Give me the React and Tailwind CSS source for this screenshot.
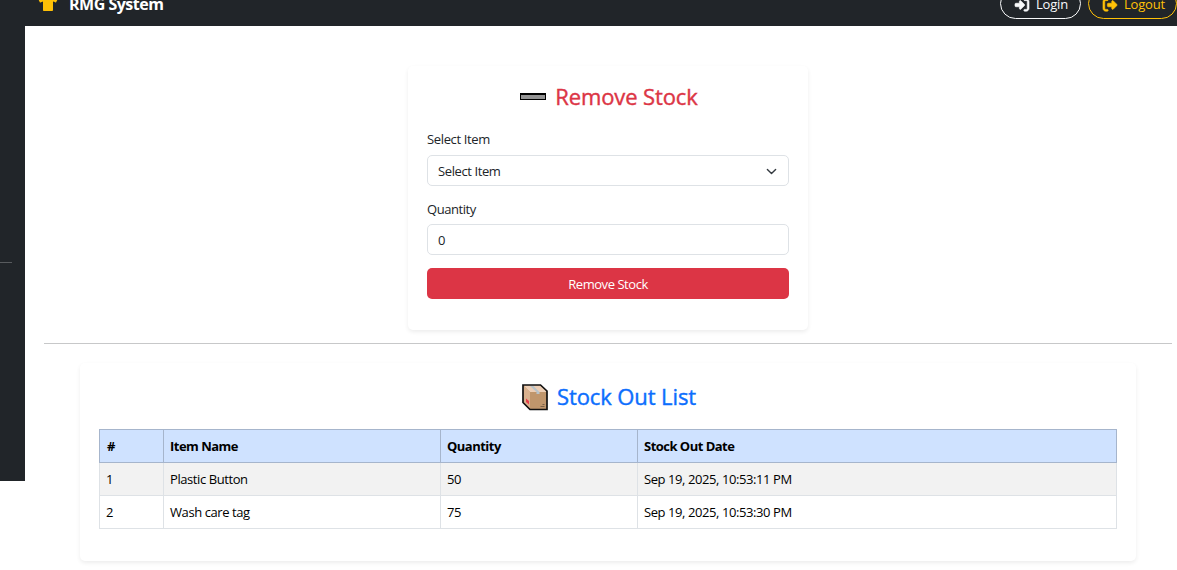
import { FaTshirt } from "react-icons/fa";
import { FaRightToBracket, FaRightFromBracket } from "react-icons/fa6";

const rows = [
  { id: 1, name: "Plastic Button", qty: 50, date: "Sep 19, 2025, 10:53:11 PM" },
  { id: 2, name: "Wash care tag", qty: 75, date: "Sep 19, 2025, 10:53:30 PM" },
];

function MinusIcon() {
  return (
    <svg width="26" height="8" viewBox="0 0 26 8" className="mt-[2px] mr-px shrink-0" shapeRendering="crispEdges">
      <rect width="26" height="7" fill="#000" />
      <rect x="1" y="2" width="24" height="4" fill="#949494" />
    </svg>
  );
}

function BoxIcon() {
  return (
    <svg width="26" height="27" viewBox="0 0 26 27" className="mt-[2px] shrink-0">
      <path d="M1 1H18.5L25 7V25.5H8L1 18.5Z" fill="#c0966c" />
      <path d="M1 1H18.5L25 8H8Z" fill="#ecceb5" />
      <path d="M1 1L8 8V25.5L1 18.5Z" fill="#d9b18e" />
      <path d="M7.5 1.5H11L17.5 8V10H14.5V8Z" fill="#b9c3c9" />
      <path d="M4 14.5L7 17V20.5L4 18Z" fill="#e8404b" />
      <path d="M18.5 22.5H22.5M20.5 20.5H22.5" stroke="#7b6047" strokeWidth="1.2" />
      <path d="M1 1H18.5L25 7V25.5H8L1 18.5Z" fill="none" stroke="#111" strokeWidth="1.7" />
    </svg>
  );
}

function Chevron() {
  return (
    <svg width="11" height="11" viewBox="0 0 16 16" fill="none" stroke="#343a40" strokeWidth="2" strokeLinecap="round" strokeLinejoin="round" className="mt-px">
      <path d="m2 5 6 6 6-6" />
    </svg>
  );
}

function Header() {
  return (
    <header className="flex h-[26px] shrink-0 items-end justify-between overflow-hidden bg-[#212529] pl-[38px]">
      <div className="mb-[10px] flex h-[24px] items-center text-white">
        <FaTshirt className="mb-[3px] h-4 w-5 text-[#ffc107]" />
        <span className="ml-[11px] text-[16px] leading-6 font-bold tracking-[-0.5px]">RMG System</span>
      </div>
      <div className="mb-[7px] flex gap-[7px] text-[13px] tracking-[-0.2px]">
        <div className="flex h-[31px] w-[81px] items-center rounded-full border border-[#f8f9fa] pl-[14px] text-[#f8f9fa]">
          <FaRightToBracket className="mt-[2px] size-[14px] overflow-visible stroke-[24]" />
          <span className="ml-[7px] pt-[3px]">Login</span>
        </div>
        <div className="flex h-[31px] w-[89px] items-center rounded-full border border-[#ffc107] pl-[14px] text-[#ffc107]">
          <FaRightFromBracket className="mt-[2px] size-[14px] overflow-visible stroke-[24]" />
          <span className="ml-[7px] pt-[3px]">Logout</span>
        </div>
      </div>
    </header>
  );
}

function RemoveStockCard() {
  return (
    <section className="mx-auto mt-[40px] h-[264px] w-[400px] rounded-[5px] bg-white px-[19px] pt-[16px] shadow-[0_2px_4px_rgba(0,0,0,0.075)]">
      <h2 className="flex h-[28px] items-center justify-center gap-[8px] pl-[2px] text-[22px] font-medium text-[#dc3545]">
        <MinusIcon />
        <span className="tracking-[-0.12px] [-webkit-text-stroke:0.4px_#dc3545]">Remove Stock</span>
      </h2>
      <label className="mt-[20px] block h-[19px] leading-[19px]">Select Item</label>
      <div className="mt-[6px] flex h-[31px] items-center justify-between rounded-[5px] border border-[#dee2e6] pr-[11px] pl-[10px]">
        <span className="pt-[2px] tracking-[-0.4px]">Select Item</span>
        <Chevron />
      </div>
      <label className="mt-[14px] block h-[19px] leading-[19px] tracking-[-0.45px]">Quantity</label>
      <div className="mt-[5px] flex h-[31px] items-center rounded-[5px] border border-[#dee2e6] pt-[2px] pl-[10px]">0</div>
      <button className="mt-[13px] block h-[31px] w-full rounded-[5px] bg-[#dc3545] pt-[3px] tracking-[-0.45px] text-white">Remove Stock</button>
    </section>
  );
}

function StockOutCard() {
  return (
    <section className="mx-auto mt-[19px] h-[198px] w-[1056px] rounded-[5px] bg-white px-[19px] pt-[19px] shadow-[0_2px_4px_rgba(0,0,0,0.075)]">
      <h2 className="flex h-[28px] items-center justify-center gap-[9px] pl-[2px] text-[22px] font-medium text-[#0d6efd]">
        <BoxIcon />
        <span className="tracking-[-0.1px] [-webkit-text-stroke:0.4px_#0d6efd]">Stock Out List</span>
      </h2>
      <table className="mt-[19px] w-[1018px] table-fixed border-collapse text-left tracking-[-0.42px] text-black">
        <colgroup>
          <col className="w-[64px]" />
          <col className="w-[277px]" />
          <col className="w-[197px]" />
          <col />
        </colgroup>
        <thead>
          <tr className="h-[33px] bg-[#cfe2ff] font-bold tracking-[-0.52px]">
            {["#", "Item Name", "Quantity", "Stock Out Date"].map((h) => (
              <th key={h} className="border border-[#a6b5cc] px-[6px] pt-[2px] pb-0 first:pl-[7px]">{h}</th>
            ))}
          </tr>
        </thead>
        <tbody>
          {rows.map((r) => (
            <tr key={r.id} className="h-[33px] odd:bg-[#f2f2f2]">
              <td className="border border-[#dee2e6] px-[6px] pt-[2px] pb-0">{r.id}</td>
              <td className="border border-[#dee2e6] px-[6px] pt-[2px] pb-0">{r.name}</td>
              <td className="border border-[#dee2e6] px-[6px] pt-[2px] pb-0">{r.qty}</td>
              <td className="border border-[#dee2e6] px-[6px] pt-[2px] pb-0">{r.date}</td>
            </tr>
          ))}
        </tbody>
      </table>
    </section>
  );
}

export default function App() {
  return (
    <div className="flex h-[570px] w-[1177px] flex-col overflow-hidden bg-white font-['Open_Sans',sans-serif] text-[13px] tracking-[-0.35px] text-[#212529]">
      <Header />
      <div className="flex flex-1">
        <aside className="h-[455px] w-[25px] shrink-0 bg-[#212529] pt-[236px]">
          <div className="h-px w-[12px] bg-[#585b5e]" />
        </aside>
        <main className="w-[1147px] pl-[19px]">
          <RemoveStockCard />
          <hr className="mt-[13px] border-[#c7c8c9]" />
          <StockOutCard />
        </main>
      </div>
    </div>
  );
}
